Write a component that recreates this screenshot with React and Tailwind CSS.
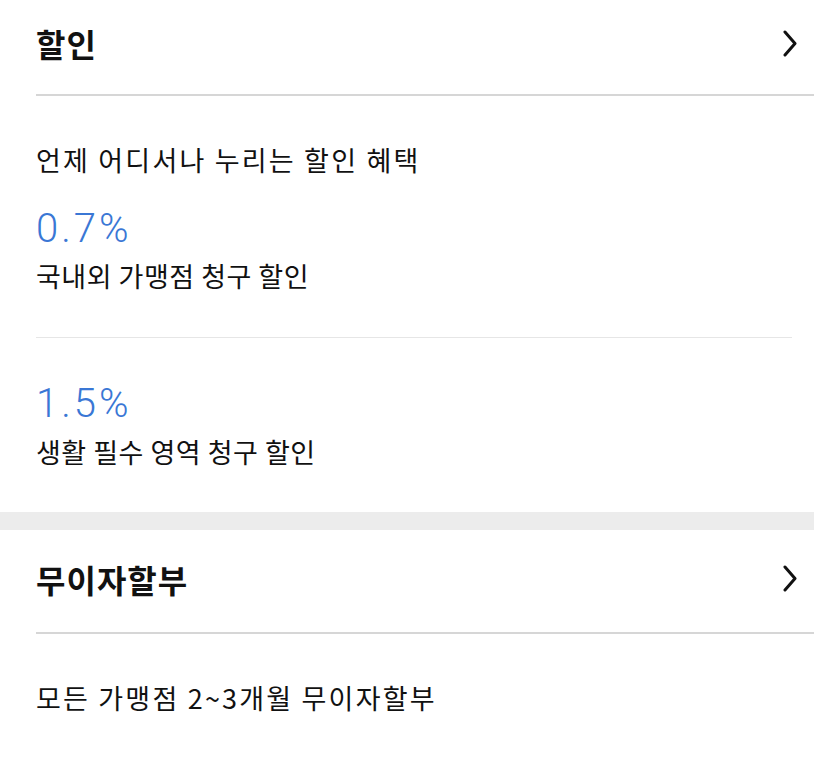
const KR = { fontFamily: '"Noto Sans CJK KR", "Noto Sans", sans-serif' };

function Chevron() {
  return (
    <svg width="16" height="27" viewBox="0 0 16 27" fill="none" className="shrink-0">
      <polyline
        points="3,2 13,13.5 3,25"
        stroke="#111"
        strokeWidth="3"
        strokeLinecap="round"
        strokeLinejoin="round"
      />
    </svg>
  );
}

function Rate({ value, label, className }) {
  return (
    <div className={className}>
      <p className="text-[40px] leading-none font-light text-[#3a77d5] font-['Roboto',sans-serif] tracking-[3px]">
        {value}
      </p>
      <p className="text-[27px] leading-[36px] tracking-[0.5px] text-[#111]" style={KR}>
        {label}
      </p>
    </div>
  );
}

export default function App() {
  return (
    <div className="w-[814px] h-[773px] bg-white overflow-hidden" style={KR}>
      <section className="pl-[36px]">
        <div className="h-[96px] pb-[8px] pr-[16px] flex items-center justify-between border-b-2 border-[#d6d6d6]">
          <h2 className="text-[32px] leading-[40px] font-bold tracking-[1px] text-[#111]">할인</h2>
          <Chevron />
        </div>
        <div className="pr-[22px]">
          <p className="mt-[46px] text-[27px] leading-[36px] tracking-[2.2px] text-[#111]">
            언제 어디서나 누리는 할인 혜택
          </p>
          <Rate
            value="0.7%"
            label="국내외 가맹점 청구 할인"
            className="mt-[31px] pb-[43px] border-b border-[#e6e6e6] [&>p:last-child]:mt-[9px]"
          />
          <Rate
            value="1.5%"
            label="생활 필수 영역 청구 할인"
            className="pt-[46px] pb-[42px] [&>p:last-child]:mt-[10px]"
          />
        </div>
      </section>

      <div className="h-[18px] bg-[#ececec]" />

      <section className="pl-[36px]">
        <div className="h-[104px] pb-[5px] pr-[16px] flex items-center justify-between border-b-2 border-[#d6d6d6]">
          <h2 className="text-[32px] leading-[40px] font-bold tracking-[1px] text-[#111]">무이자할부</h2>
          <Chevron />
        </div>
        <p className="mt-[46px] text-[27px] leading-[36px] tracking-[2.2px] text-[#111]">
          모든 가맹점 2~3개월 무이자할부
        </p>
      </section>
    </div>
  );
}
